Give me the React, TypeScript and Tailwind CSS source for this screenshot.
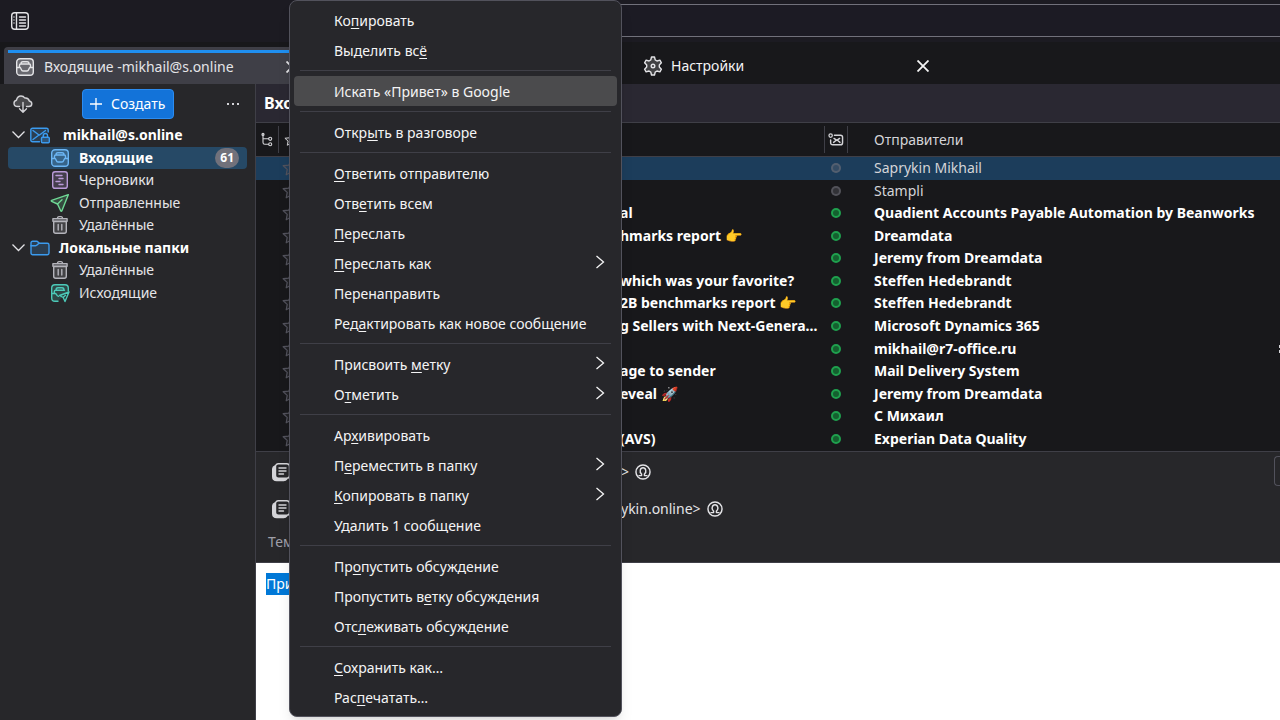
import { FC, ReactNode } from "react";

interface MenuEntry {
    label: string;
    accessKey?: number; // index of the underlined letter
    submenu?: boolean;
    active?: boolean;
}

interface Message {
    subject: string;
    sender: string;
    unread: boolean;
    selected?: boolean;
    clipped?: boolean;
}

interface Folder {
    name: string;
    icon: ReactNode;
    selected?: boolean;
    count?: number;
}

interface IconProps {
    className?: string;
    size?: string;
    children?: ReactNode;
}

const Icon: FC<IconProps> = ({ className = "", size = "size-5", children }) => (
    <svg
        viewBox="0 0 20 20"
        className={`shrink-0 ${size} ${className}`}
        fill="none"
        stroke="currentColor"
        strokeWidth="1.4"
        strokeLinecap="round"
        strokeLinejoin="round"
        aria-hidden="true"
    >
        {children}
    </svg>
);

const InboxIcon: FC<{ className?: string }> = ({ className }) => (
    <Icon className={className}>
        <rect x="1.7" y="1.7" width="16.6" height="16.6" rx="3.4" fill="currentColor" fillOpacity="0.25" />
        <path d="M1.8 10.500h3.200c1.200 0 1 3.500 3 3.500h4c2 0 1.800-3.500 3-3.500h3.200" />
        <path d="M4.500 10V8.200c0-.7.5-1.200 1.200-1.200h8.600c.7 0 1.200.5 1.200 1.200V10M6 6.800c0-1.300.6-2 1.900-2h4.200c1.300 0 1.900.7 1.900 2" />
    </Icon>
);

const DraftIcon: FC = () => (
    <Icon className="text-[#b99ad8]">
        <rect x="2.700" y="1.700" width="14.600" height="16.600" rx="2.400" fill="currentColor" fillOpacity="0.2" />
        <path d="M6 5.500h6M9 8.500h4M6 11.500h4M9 14.500h4" />
    </Icon>
);

const SentIcon: FC = () => (
    <Icon className="text-[#6fd895]">
        <path d="M18.300 1.700 1.600 7.400c-.5.2-.5.700 0 .9L7.500 11l3.300 7c.2.4.8.4 1 0z" fill="currentColor" fillOpacity="0.2" />
        <path d="m7.500 11 4.500-4.200" />
    </Icon>
);

const TrashIcon: FC = () => (
    <Icon className="text-[#b4b4bb]">
        <path d="M3.700 6.500h12.600v9.800c0 1.200-.8 2-2 2H5.700c-1.200 0-2-.8-2-2z" fill="currentColor" fillOpacity="0.2" />
        <path d="M2.900 3.800h14.200v2.500H2.900zM7.500 3.600c0-1.400.5-2 1.500-2h2c1 0 1.500.6 1.500 2M8.200 9.500v5.500M11.800 9.500v5.500" />
    </Icon>
);

const OutboxIcon: FC = () => (
    <Icon className="text-[#4cc9b8]">
        <path d="M8 18.300H5c-2 0-3.300-1.300-3.300-3.300V5C1.700 3 3 1.700 5 1.700h10c2 0 3.300 1.300 3.300 3.300v3" fill="currentColor" fillOpacity="0.2" />
        <path d="M1.800 10.500h3.700c.8 0 1 2.500 3 2.900M4.300 10.200V8.500c0-.8.5-1.200 1.200-1.200h9M6 7.200c0-1.500.6-2.400 1.900-2.400h4.200c1.300 0 1.900.9 1.900 2.400" />
        <path d="m19 9-9.500 3.500 3.700 2 1.800 4zM13.200 14.500l2.300-2.300" />
    </Icon>
);

const AccountIcon: FC = () => (
    <Icon className="text-[#3b9bef]">
        <path d="M9.500 16.800H2.500c-1 0-1.700-.7-1.700-1.700V5c0-1 .7-1.700 1.700-1.700h14c1 0 1.700.7 1.700 1.700v2" fill="currentColor" fillOpacity="0.2" />
        <path d="m3 5.500 6 4.500-6 4.500M9.500 10l6-4.500" />
        <rect x="11.500" y="12.200" width="7.800" height="5.500" rx="1" fill="currentColor" fillOpacity="0.4" />
        <path d="M13.300 12v-1.500c0-2.700 4.200-2.700 4.200 0V12" />
    </Icon>
);

const LocalFolderIcon: FC = () => (
    <Icon className="text-[#3b9bef]">
        <path d="M1 5c0-1 .7-1.700 1.700-1.700h4c1.300 0 1.800 2 3 2h7.600c1 0 1.700.7 1.700 1.700v8c0 1-.7 1.700-1.700 1.700H2.700c-1 0-1.700-.7-1.700-1.700z" fill="currentColor" fillOpacity="0.2" />
        <path d="M1 7.800h4.500c2 0 2.200-2.400 4-2.400" />
    </Icon>
);

const GearIcon: FC = () => (
    <Icon className="text-zinc-200">
        <path
            d="M8.500.2h3l.7 2.900 1.800 1.100 2.900-.8 1.500 2.600-2.100 2.100v2.200l2.100 2.100-1.500 2.600-2.900-.8-1.800 1.100-.7 2.900h-3l-.7-2.900L6 14.200l-2.900.8-1.500-2.600 2.100-2.100V8.100L1.600 6l1.500-2.600 2.900.8 1.800-1.100z"
            transform="translate(0 .8)"
            fill="currentColor"
            fillOpacity="0.2"
        />
        <circle cx="10" cy="10" r="1.800" />
    </Icon>
);

const StarIcon: FC<{ size?: string; className?: string }> = ({ size, className }) => (
    <Icon size={size} className={className}>
        <path d="m10 1.500 2.400 5.300 6.300.7-4.500 4 1.100 6L10 14.700l-5.300 2.800 1.100-6-4.500-4 6.300-.7z" fill="currentColor" fillOpacity="0.15" />
    </Icon>
);

const ContactIcon: FC = () => (
    <Icon size="size-4" className="text-zinc-200">
        <circle cx="10" cy="10" r="8.800" strokeWidth="1.800" />
        <path d="M5 14.500h3.200v-2C5 10 6.500 4.800 10 4.800s5 5.200 1.800 7.700v2H15" strokeWidth="1.800" />
    </Icon>
);

const RecipientsIcon: FC = () => (
    <Icon className="text-zinc-300">
        <path d="M4 4C2.500 4.500 1.700 5.500 1.700 7v7.500c0 2.500 1.300 4 4 4h7c1.500 0 2.300-.5 3-1.500H8c-2.700 0-4-1.300-4-4z" fill="currentColor" />
        <rect x="4.500" y="1.700" width="14" height="14.500" rx="2.800" />
        <path d="M8 6h7M8 9h7M8 12h4.500" />
    </Icon>
);

const Twisty: FC = () => (
    <svg viewBox="0 0 16 16" className="size-4 shrink-0 text-zinc-200" fill="none" stroke="currentColor" strokeWidth="1.300" aria-hidden="true">
        <path d="m1.500 4.500 6 6 6-6" />
    </svg>
);

const menuGroups: MenuEntry[][] = [
    [
        { label: "Копировать", accessKey: 2 },
        { label: "Выделить всё", accessKey: 11 },
    ],
    [{ label: "Искать «Привет» в Google", active: true }],
    [{ label: "Открыть в разговоре", accessKey: 4 }],
    [
        { label: "Ответить отправителю", accessKey: 0 },
        { label: "Ответить всем", accessKey: 3 },
        { label: "Переслать", accessKey: 0 },
        { label: "Переслать как", accessKey: 0, submenu: true },
        { label: "Перенаправить" },
        { label: "Редактировать как новое сообщение", accessKey: 3 },
    ],
    [
        { label: "Присвоить метку", accessKey: 10, submenu: true },
        { label: "Отметить", accessKey: 1, submenu: true },
    ],
    [
        { label: "Архивировать", accessKey: 2 },
        { label: "Переместить в папку", accessKey: 1, submenu: true },
        { label: "Копировать в папку", accessKey: 0, submenu: true },
        { label: "Удалить 1 сообщение" },
    ],
    [
        { label: "Пропустить обсуждение", accessKey: 2 },
        { label: "Пропустить ветку обсуждения", accessKey: 12 },
        { label: "Отслеживать обсуждение", accessKey: 3 },
    ],
    [
        { label: "Сохранить как…", accessKey: 0 },
        { label: "Распечатать…", accessKey: 3 },
    ],
];

const messages: Message[] = [
    { subject: "", sender: "Saprykin Mikhail", unread: false, selected: true },
    { subject: "", sender: "Stampli", unread: false },
    { subject: "al", sender: "Quadient Accounts Payable Automation by Beanworks", unread: true },
    { subject: "hmarks report 👉", sender: "Dreamdata", unread: true },
    { subject: "", sender: "Jeremy from Dreamdata", unread: true },
    { subject: "which was your favorite?", sender: "Steffen Hedebrandt", unread: true },
    { subject: "2B benchmarks report 👉", sender: "Steffen Hedebrandt", unread: true },
    { subject: "g Sellers with Next-Genera…", sender: "Microsoft Dynamics 365", unread: true },
    { subject: "", sender: "mikhail@r7-office.ru", unread: true, clipped: true },
    { subject: "age to sender", sender: "Mail Delivery System", unread: true },
    { subject: "eveal 🚀", sender: "Jeremy from Dreamdata", unread: true },
    { subject: "", sender: "С Михаил", unread: true },
    { subject: "(AVS)", sender: "Experian Data Quality", unread: true },
];

const accountFolders: Folder[] = [
    { name: "Входящие", icon: <InboxIcon className="text-[#6cb6f5]" />, selected: true, count: 61 },
    { name: "Черновики", icon: <DraftIcon /> },
    { name: "Отправленные", icon: <SentIcon /> },
    { name: "Удалённые", icon: <TrashIcon /> },
];

const localFolders: Folder[] = [
    { name: "Удалённые", icon: <TrashIcon /> },
    { name: "Исходящие", icon: <OutboxIcon /> },
];

const AccessLabel: FC<{ label: string; index?: number }> = ({ label, index }) => {
    if (index === undefined) return <span>{label}</span>;
    return (
        <span>
            {label.slice(0, index)}
            <span className="underline underline-offset-2">{label[index]}</span>
            {label.slice(index + 1)}
        </span>
    );
};

const FolderRow: FC<{ folder: Folder }> = ({ folder }) => (
    <li className="flex flex-1">
        <a
            href="#"
            className={`flex w-full items-center gap-[9px] rounded-sm pr-2 pl-[42px] leading-5 ${
                folder.selected ? "bg-[#264966] font-bold text-white" : "text-zinc-200"
            }`}
        >
            {folder.icon}
            <span className="grow">{folder.name}</span>
            {folder.count && (
                <span className="rounded-full bg-zinc-500 px-[5px] text-xs leading-5 text-white">{folder.count}</span>
            )}
        </a>
    </li>
);

const ContextMenu: FC = () => (
    <div
        role="menu"
        className="absolute top-0 left-[289px] z-10 w-[333px] rounded-lg border border-zinc-600 bg-[#27272b] p-1 shadow-lg"
    >
        {menuGroups.map((group, i) => (
            <div key={i}>
                {i > 0 && <hr className="mx-[6px] my-[5px] border-zinc-700" />}
                {group.map((entry) => (
                    <button
                        key={entry.label}
                        type="button"
                        role="menuitem"
                        className={`flex h-[30px] w-full items-center justify-between rounded pt-[2px] pr-3 pl-10 text-left text-zinc-100 ${
                            entry.active ? "bg-[#4b4b4d]" : ""
                        }`}
                    >
                        <AccessLabel label={entry.label} index={entry.accessKey} />
                        {entry.submenu && (
                            <svg viewBox="0 0 10 16" className="mb-1 h-4 w-[10px]" fill="none" stroke="currentColor" strokeWidth="1.300" aria-hidden="true">
                                <path d="m1.500 2 7 6-7 6" />
                            </svg>
                        )}
                    </button>
                ))}
            </div>
        ))}
    </div>
);

const Sidebar: FC = () => (
    <aside className="w-64 shrink-0 border-r border-zinc-700 bg-zinc-800">
        <div className="flex h-10 items-center pr-3 pl-[13px]">
            <button type="button" aria-label="Получить почту">
                <Icon className="text-zinc-300">
                    <path d="M6.500 12.500H4.800C2.500 12.500 1 11 1 9.200c0-1.700 1-2.700 2.500-3C4 3.500 5.500 2 8 2c1.800 0 3 .7 3.800 2 2.400-.3 4 .8 4.500 3 1.600.4 2.500 1.300 2.500 2.700 0 1.700-1.200 2.800-3 2.800h-2.300" fill="currentColor" fillOpacity="0.2" />
                    <path d="M10 8.500v9.500M6.500 14.700l3.500 3.500 3.500-3.500" />
                </Icon>
            </button>
            <button
                type="button"
                className="ml-[49px] flex h-[30px] w-[92px] items-center gap-[9px] rounded-sm border border-[#2c8cf0] bg-[#1373d9] pl-[7px] text-white"
            >
                <svg viewBox="0 0 12 12" className="size-3" stroke="currentColor" strokeWidth="1.300" aria-hidden="true">
                    <path d="M6 0v12M0 6h12" />
                </svg>
                Создать
            </button>
            <button type="button" aria-label="Параметры панели папок" className="ml-auto flex w-5 justify-center gap-[3px]">
                <span className="size-[2px] bg-zinc-300" />
                <span className="size-[2px] bg-zinc-300" />
                <span className="size-[2px] bg-zinc-300" />
            </button>
        </div>
        <ul className="flex h-[180px] flex-col px-2">
            <li className="flex flex-1 items-center pl-[3px] leading-5 font-bold text-white">
                <Twisty />
                <span className="ml-[3px] flex"><AccountIcon /></span>
                <span className="ml-[13px]">mikhail@s.online</span>
            </li>
            {accountFolders.map((folder) => (
                <FolderRow key={folder.name} folder={folder} />
            ))}
            <li className="flex flex-1 items-center pl-[3px] leading-5 font-bold text-white">
                <Twisty />
                <span className="ml-[3px] flex"><LocalFolderIcon /></span>
                <span className="ml-[9px]">Локальные папки</span>
            </li>
            {localFolders.map((folder) => (
                <FolderRow key={folder.name} folder={folder} />
            ))}
        </ul>
    </aside>
);

const MessageTable: FC = () => (
    <div className="border-b border-zinc-700 bg-zinc-900 pb-px">
        <table className="h-[327px] w-full table-fixed border-separate border-spacing-0">
            <colgroup>
                <col className="w-[23px]" />
                <col className="w-[23px]" />
                <col className="w-[522px]" />
                <col className="w-6" />
                <col />
                <col className="w-[2px]" />
            </colgroup>
            <thead>
                <tr className="h-[34px] text-left text-zinc-300">
                    <th aria-label="Обсуждение" className="border-b border-zinc-700 p-0">
                        <div className="flex h-[27px] items-center justify-center border-r border-zinc-700">
                            <Icon size="size-4">
                                <path d="M5 3v10c0 1.500.8 2.300 2.300 2.300H12M5 8.500h7" />
                                <circle cx="5" cy="3" r="1.300" />
                                <circle cx="14" cy="8.500" r="1.900" />
                                <circle cx="14" cy="15.300" r="1.900" />
                            </Icon>
                        </div>
                    </th>
                    <th aria-label="Звёздочка" className="border-b border-zinc-700 p-0">
                        <StarIcon size="size-[14px]" className="mx-auto" />
                    </th>
                    <th aria-label="Тема" className="border-b border-zinc-700 p-0" />
                    <th aria-label="Спам" className="border-b border-zinc-700 p-0">
                        <div className="flex h-[27px] items-center justify-center border-x border-zinc-700">
                            <Icon size="size-4">
                                <circle cx="3.300" cy="4.500" r="2.100" strokeWidth="1.600" />
                                <path d="M8 4h7.500c1.700 0 2.700 1 2.700 2.700v6.600c0 1.700-1 2.700-2.700 2.700H6c-1.700 0-2.700-1-2.700-2.700V10" strokeWidth="1.800" />
                                <path d="m7.500 8 3.500 2.500L14.500 8M7 13l2.500-2M15 13l-2.500-2" strokeWidth="1.800" />
                            </Icon>
                        </div>
                    </th>
                    <th className="border-b border-zinc-700 py-0 pr-0 pl-[26px] font-normal">Отправители</th>
                    <th aria-label="Дата" className="border-b border-zinc-700 p-0" />
                </tr>
            </thead>
            <tbody>
                {messages.map((message, i) => (
                    <tr
                        key={i}
                        className={`leading-5 whitespace-nowrap ${message.selected ? "bg-[#1c3d5b]" : ""} ${
                            message.unread ? "font-bold text-white" : "text-zinc-300"
                        }`}
                    >
                        <td className="p-0" />
                        <td className="p-0">
                            <StarIcon size="size-[18px]" className="mx-auto text-zinc-600" />
                        </td>
                        <td className="overflow-hidden py-0 pr-0 pl-[318px]">{message.subject}</td>
                        <td className="p-0">
                            <span
                                className={`mx-auto block size-[10px] rounded-full border-2 ${
                                    message.unread ? "border-[#1fa04e] bg-[#14602f]" : "border-zinc-500/50 bg-zinc-500/30"
                                }`}
                            />
                        </td>
                        <td className="overflow-hidden py-0 pr-0 pl-[26px]">{message.sender}</td>
                        <td className="p-0">
                            {message.clipped && (
                                <span className="flex h-2 flex-col justify-between">
                                    <span className="ml-px h-[3px] bg-zinc-300" />
                                    <span className="ml-px h-[3px] bg-zinc-300" />
                                </span>
                            )}
                        </td>
                    </tr>
                ))}
            </tbody>
        </table>
    </div>
);

const MessagePane: FC = () => (
    <section className="flex grow flex-col">
        <header className="flex h-[111px] justify-between border-b border-zinc-700 bg-zinc-800 pt-px text-zinc-200">
            <div>
                <div className="flex h-[37px] items-center pl-[15px]">
                    <RecipientsIcon />
                    <span className="mr-[6px] ml-[330px]">&gt;</span>
                    <ContactIcon />
                </div>
                <div className="flex h-[37px] items-center pl-[15px]">
                    <RecipientsIcon />
                    <span className="mr-[6px] ml-[330px]">ykin.online&gt;</span>
                    <ContactIcon />
                </div>
                <div className="flex h-[30px] items-center pl-3 text-zinc-400">Тема</div>
            </div>
            <button type="button" aria-label="Ответить" className="mt-[3px] h-[30px] w-[6px] rounded-l border-y border-l border-zinc-600" />
        </header>
        <div className="grow bg-white px-[10px] pt-[10px]">
            <span className="inline-block bg-[#0078d7] leading-[22px] text-white">Привет</span>
        </div>
    </section>
);

const App: FC = () => (
    <div className="relative flex min-h-screen flex-col overflow-hidden bg-zinc-900 font-['Noto_Sans','Open_Sans',sans-serif] text-sm">
        <div className="flex h-[42px] items-center bg-[#1c1b22] pb-px">
            <button type="button" aria-label="Пространства" className="ml-[10px]">
                <Icon className="text-zinc-200">
                    <rect x="1.700" y="1.700" width="16.600" height="16.600" rx="3" />
                    <path d="M6.500 2v16M9.500 6h6M9.500 9h6M9.500 12h6M9.500 15h6" />
                    <path d="M4 6v.1M4 9v.1M4 12v.1" />
                </Icon>
            </button>
            <input aria-label="Поиск" className="ml-[280px] h-[33px] grow border-y border-zinc-500 bg-[#1c1b24] outline-none" />
        </div>

        <div className="flex h-[42px] items-end bg-[#18181b] pl-1">
            <div className="flex h-[37px] w-[330px] flex-col rounded-t-sm bg-[#3f3f47] pt-[3px] pl-1">
                <div className="h-[3px] bg-[#1f8ff0]" />
                <div className="flex grow items-center pr-9 pb-1 pl-[7px] text-zinc-200">
                    <InboxIcon />
                    <span className="ml-[9px]">Входящие -mikhail@s.online</span>
                    <button type="button" aria-label="Закрыть вкладку" className="ml-auto">
                        <svg viewBox="0 0 12 12" className="size-3" stroke="currentColor" strokeWidth="1.800" aria-hidden="true">
                            <path d="m.5.5 11 11M11.500.5l-11 11" />
                        </svg>
                    </button>
                </div>
            </div>
            <div className="flex h-[37px] grow items-center pl-[309px] text-zinc-100">
                <GearIcon />
                <span className="ml-2">Настройки</span>
                <button type="button" aria-label="Закрыть вкладку" className="ml-[173px]">
                    <svg viewBox="0 0 12 12" className="size-3" stroke="currentColor" strokeWidth="1.800" aria-hidden="true">
                        <path d="m.5.5 11 11M11.500.5l-11 11" />
                    </svg>
                </button>
            </div>
        </div>

        <div className="flex grow">
            <Sidebar />
            <main className="flex min-w-0 grow flex-col">
                <div className="flex h-[39px] items-center border-b border-zinc-700 bg-[#2a2832] px-2 text-base font-bold text-white">
                    Входящие
                </div>
                <MessageTable />
                <MessagePane />
            </main>
        </div>

        <ContextMenu />
    </div>
);

export default App;
